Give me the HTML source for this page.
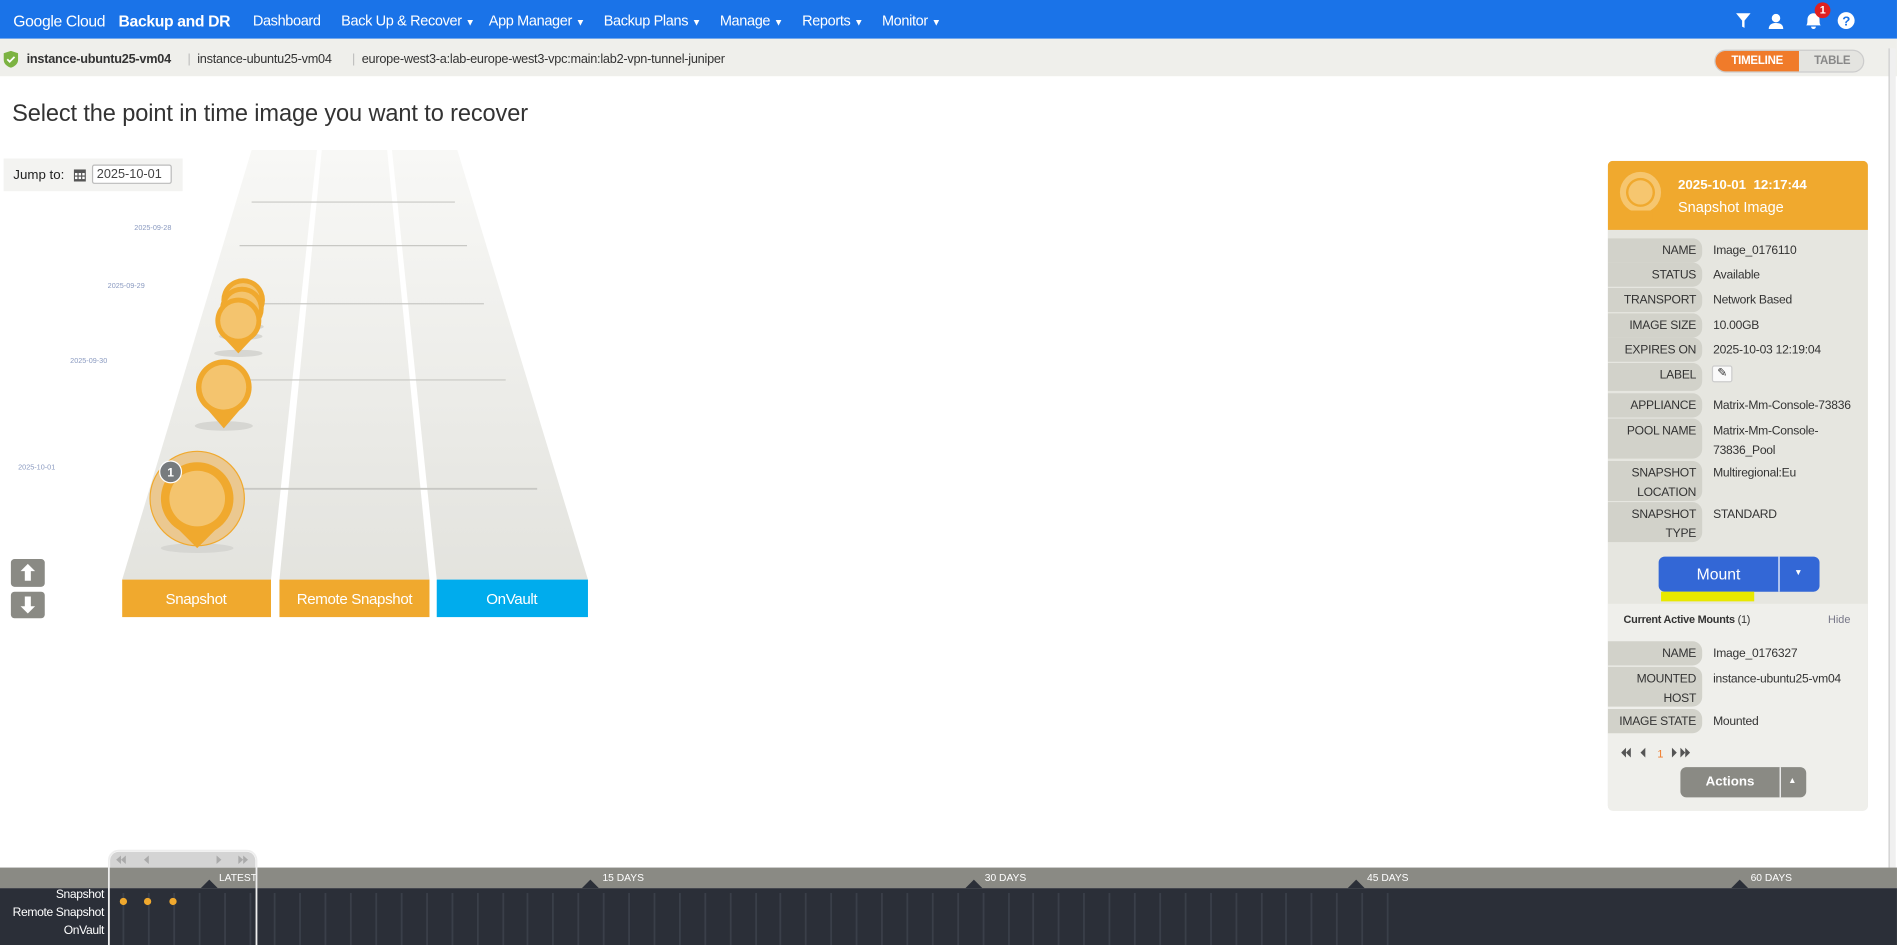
<!DOCTYPE html>
<html><head><meta charset="utf-8"><style>
*{box-sizing:border-box;margin:0;padding:0}
body{width:1897px;height:945px;overflow:hidden;background:#fff;font-family:"Liberation Sans",Arial,sans-serif}
#w{position:absolute;left:0;top:0;width:1568px;height:781px;transform:scale(1.2098,1.21);transform-origin:0 0}
.a{position:absolute}
.top{left:0;top:0;width:1568px;height:32px;background:#1a73e8;color:#fff;font-size:12px;letter-spacing:-0.3px}
.top span{position:absolute;top:10px;white-space:nowrap}
.top i{font-style:normal;font-size:8px}
.crumb{left:0;top:32px;width:1568px;height:31px;background:#efefeb;font-size:10.5px;color:#333;letter-spacing:-0.2px}
.crumb span{position:absolute;top:11px;white-space:nowrap}
.panel{left:1329px;top:133px;width:215px;height:537px;background:#e6e6e0;border-radius:4px;overflow:hidden}
.row{position:absolute;left:0;width:215px;font-size:10px;color:#333;letter-spacing:-0.2px}
.row .l{position:absolute;left:0;top:0;width:78px;background:#d2d2ca;border-radius:0 8px 8px 0;text-align:right;padding:3px 5px 0 0;line-height:16px;height:100%}
.row .v{position:absolute;left:87px;top:3px;line-height:16px;white-space:nowrap}
.tl{font-size:10px;color:#fff;text-align:right;position:absolute;left:0;width:86px;letter-spacing:-0.3px}
</style></head><body><div id="w">
<div class="a top">
<span style="left:11px;font-size:13px">Google Cloud</span>
<span style="left:98px;font-size:13px;font-weight:bold">Backup and DR</span>
<span style="left:209px">Dashboard</span>
<span style="left:282px">Back Up &amp; Recover <i>▼</i></span>
<span style="left:404px">App Manager <i>▼</i></span>
<span style="left:499px">Backup Plans <i>▼</i></span>
<span style="left:595px">Manage <i>▼</i></span>
<span style="left:663px">Reports <i>▼</i></span>
<span style="left:729px">Monitor <i>▼</i></span>
<svg class="a" style="left:1434px;top:9px" width="100" height="16"><path d="M1 2h12l-5 6v6l-2-1v-5z" fill="#fff"/><circle cx="34" cy="6" r="3.5" fill="#fff"/><path d="M28 15c0-4 3-5 6-5s6 1 6 5z" fill="#fff"/><path d="M59 12c1-1 1-3 1-5a5 5 0 0 1 10 0c0 2 0 4 1 5zM63 13h4a2 2 0 0 1-4 0z" fill="#fff"/><circle cx="92" cy="8" r="7" fill="#fff"/><text x="92" y="12" font-size="11" font-weight="bold" fill="#1a73e8" text-anchor="middle" font-family="Liberation Sans">?</text></svg>
<div class="a" style="left:1500px;top:2px;width:13px;height:13px;border-radius:50%;background:#e02020;font-size:9px;text-align:center;line-height:13px;font-weight:bold">1</div>
</div>
<div class="a crumb">
<svg class="a" style="left:3px;top:10px" width="12" height="14"><path d="M6 0l6 2v5c0 4-3 6-6 7-3-1-6-3-6-7V2z" fill="#7cb342"/><path d="M3 7l2 2 4-4" stroke="#fff" stroke-width="1.5" fill="none"/></svg>
<span style="left:22px;font-weight:bold">instance-ubuntu25-vm04</span>
<span style="left:155px;color:#bbb">|</span>
<span style="left:163px">instance-ubuntu25-vm04</span>
<span style="left:291px;color:#bbb">|</span>
<span style="left:299px">europe-west3-a:lab-europe-west3-vpc:main:lab2-vpn-tunnel-juniper</span>
<div class="a" style="left:1417px;top:9px;width:124px;height:19px;border-radius:10px;border:1px solid #ccc;background:#e4e4e0;overflow:hidden;font-size:9.5px;font-weight:bold">
<div class="a" style="left:0;top:0;width:69px;height:19px;background:#f07b2a;color:#fff;text-align:center;line-height:18px">TIMELINE</div>
<div class="a" style="left:69px;top:0;width:55px;height:19px;color:#888;text-align:center;line-height:18px">TABLE</div></div>
</div>
<div class="a" style="left:10px;top:83px;font-size:19.5px;color:#333;letter-spacing:-0.1px">Select the point in time image you want to recover</div>
<div class="a" style="left:3px;top:131px;width:148px;height:27px;background:#f3f3f1;font-size:11px;color:#222">
<span class="a" style="left:8px;top:8px">Jump to:</span>
<svg class="a" style="left:58px;top:9px" width="10" height="10"><rect width="10" height="10" fill="#555"/><g fill="#fff"><rect x="1" y="3" width="2" height="2"/><rect x="4" y="3" width="2" height="2"/><rect x="7" y="3" width="2" height="2"/><rect x="1" y="6" width="2" height="2"/><rect x="4" y="6" width="2" height="2"/><rect x="7" y="6" width="2" height="2"/></g></svg>
<div class="a" style="left:73px;top:5px;width:66px;height:16px;border:1px solid #bbb;border-radius:2px;background:#fff;padding:1px 3px;font-size:10.5px;color:#444;white-space:nowrap;overflow:hidden">2025-10-01</div></div>
<svg class="a" style="left:0;top:120px" width="520" height="400" font-family="Liberation Sans">
<defs><linearGradient id="g" x1="0" y1="0" x2="0" y2="1"><stop offset="0" stop-color="#f8f8f6"/><stop offset="1" stop-color="#e3e3de"/></linearGradient></defs>
<polygon points="208,4 262,4 224,359 101,359" fill="url(#g)"/>
<polygon points="266,4 320,4 355,359 231,359" fill="url(#g)"/>
<polygon points="324,4 378,4 486,359 361,359" fill="url(#g)"/>
<g stroke="#c8c8c4" stroke-width="1"><line x1="208" y1="47" x2="376" y2="47"/><line x1="198" y1="83" x2="386" y2="83"/><line x1="186" y1="131" x2="400" y2="131"/><line x1="170" y1="194" x2="418" y2="194"/><line x1="145" y1="284" x2="444" y2="284" stroke-width="1.5"/></g>
<g font-size="6" fill="#8a9ac0"><text x="111" y="70">2025-09-28</text><text x="89" y="118">2025-09-29</text><text x="58" y="180">2025-09-30</text><text x="15" y="268">2025-10-01</text></g>
<g fill="#d6d6d2"><ellipse cx="201" cy="150" rx="17" ry="3"/><ellipse cx="199" cy="158" rx="18" ry="3"/><ellipse cx="197" cy="172" rx="20" ry="3"/><ellipse cx="185" cy="232" rx="24" ry="4"/><ellipse cx="163" cy="333" rx="30" ry="4"/></g>
<g><circle cx="201" cy="128" r="18" fill="#f0a92e"/><circle cx="201" cy="128" r="14" fill="#f4c46e"/>
<circle cx="200" cy="135" r="18" fill="#f0a92e"/><circle cx="200" cy="135" r="14" fill="#f4c46e"/>
<circle cx="197" cy="145" r="19" fill="#f0a92e"/><polygon points="181,155 213,155 197,172" fill="#f0a92e"/><circle cx="197" cy="145" r="15" fill="#f4c46e"/></g>
<circle cx="185" cy="200" r="23" fill="#f0a92e"/><polygon points="166,212 204,212 185,234" fill="#f0a92e"/><circle cx="185" cy="200" r="18.5" fill="#f4c46e"/>
<circle cx="163" cy="292" r="39" fill="#ebc890" stroke="#f0a92e" stroke-width="1"/>
<circle cx="163" cy="292" r="30" fill="#f0a92e"/><polygon points="140,310 186,310 163,333" fill="#f0a92e"/><circle cx="163" cy="292" r="23" fill="#f4c46e"/>
<circle cx="141" cy="270" r="9" fill="#777b7e" stroke="#fff" stroke-width="1"/><text x="141" y="274" font-size="10" font-weight="bold" fill="#fff" text-anchor="middle">1</text>
<rect x="101" y="359" width="123" height="31" fill="#f0a92e"/><rect x="231" y="359" width="124" height="31" fill="#f0a92e"/><rect x="361" y="359" width="125" height="31" fill="#00aced"/>
<g font-size="12.5" fill="#fff" text-anchor="middle" letter-spacing="-0.3"><text x="162" y="379">Snapshot</text><text x="293" y="379">Remote Snapshot</text><text x="423" y="379">OnVault</text></g>
<rect x="9" y="342" width="28" height="23" rx="3" fill="#8a8a84"/><rect x="9" y="369" width="28" height="22" rx="3" fill="#8a8a84"/>
<path d="M23 346l6 6h-3.5v8h-5v-8H17z" fill="#fff"/><path d="M23 387l6-6h-3.5v-8h-5v8H17z" fill="#fff"/>
</svg>
<div class="a panel">
<div class="a" style="left:0;top:0;width:215px;height:57px;background:#f0a92e;color:#fff">
<svg class="a" style="left:7px;top:7px" width="40" height="42"><circle cx="20" cy="19" r="17" fill="#f6c66f"/><circle cx="20" cy="19" r="12" fill="#f0a92e"/><circle cx="20" cy="19" r="10" fill="#f6c66f"/><rect x="10" y="34" width="20" height="8" fill="#f0a92e"/></svg>
<div class="a" style="left:58px;top:14px;font-size:11px;font-weight:bold">2025-10-01&nbsp;&nbsp;12:17:44</div>
<div class="a" style="left:58px;top:31px;font-size:12px">Snapshot Image</div></div>
<div class="row" style="top:64px;height:20px"><div class="l">NAME</div><div class="v">Image_0176110</div></div>
<div class="row" style="top:84px;height:20px"><div class="l">STATUS</div><div class="v">Available</div></div>
<div class="row" style="top:105px;height:20px"><div class="l">TRANSPORT</div><div class="v">Network Based</div></div>
<div class="row" style="top:126px;height:20px"><div class="l">IMAGE SIZE</div><div class="v">10.00GB</div></div>
<div class="row" style="top:146px;height:20px"><div class="l">EXPIRES ON</div><div class="v">2025-10-03 12:19:04</div></div>
<div class="row" style="top:167px;height:23px"><div class="l">LABEL</div><div class="v" style="left:86px;top:2px;width:17px;height:14px;background:#fafafa;border:1px solid #ccc;border-radius:2px;font-size:10px;text-align:center;line-height:12px">✎</div></div>
<div class="row" style="top:192px;height:20px"><div class="l">APPLIANCE</div><div class="v">Matrix-Mm-Console-73836</div></div>
<div class="row" style="top:213px;height:33px"><div class="l">POOL NAME</div><div class="v">Matrix-Mm-Console-<br>73836_Pool</div></div>
<div class="row" style="top:248px;height:33px"><div class="l">SNAPSHOT<br>LOCATION</div><div class="v">Multiregional:Eu</div></div>
<div class="row" style="top:282px;height:33px"><div class="l">SNAPSHOT<br>TYPE</div><div class="v">STANDARD</div></div>
<div class="a" style="left:42px;top:327px;width:133px;height:29px;background:#3367d6;border-radius:5px;color:#fff;font-size:13px">
<span class="a" style="left:0;width:99px;text-align:center;top:7px">Mount</span><div class="a" style="left:99px;top:0;width:1px;height:29px;background:#fff"></div><span class="a" style="left:112px;top:10px;font-size:7px">▼</span></div>
<div class="a" style="left:44px;top:356px;width:77px;height:8px;background:#e8e800"></div>
<div class="a" style="left:0;top:366px;width:215px;height:171px;background:#efefeb"></div>
<div class="a" style="left:13px;top:374px;font-size:9px;font-weight:bold;color:#333;letter-spacing:-0.2px">Current Active Mounts <span style="font-weight:normal">(1)</span></div>
<div class="a" style="left:182px;top:374px;font-size:9px;color:#778">Hide</div>
<div class="row" style="top:397px;height:20px"><div class="l">NAME</div><div class="v">Image_0176327</div></div>
<div class="row" style="top:418px;height:33px"><div class="l">MOUNTED<br>HOST</div><div class="v">instance-ubuntu25-vm04</div></div>
<div class="row" style="top:453px;height:20px"><div class="l">IMAGE STATE</div><div class="v">Mounted</div></div>
<svg class="a" style="left:11px;top:484px" width="60" height="10"><g fill="#555"><path d="M4 1v8L0 5zM8 1v8L4 5zM20 1v8l-4-4zM42 1v8l4-4zM49 1v8l4-4zM53 1v8l4-4z"/></g><text x="30" y="9" font-size="9" fill="#f07b2a" font-family="Liberation Sans">1</text></svg>
<div class="a" style="left:60px;top:501px;width:104px;height:25px;background:#8a8a84;border-radius:5px;color:#fff;font-size:11px;font-weight:bold">
<span class="a" style="left:0;width:82px;text-align:center;top:6px">Actions</span><div class="a" style="left:82px;top:0;width:1px;height:25px;background:#fff"></div><span class="a" style="left:89px;top:8px;font-size:7px">▲</span></div>
</div>
<div class="a" style="left:1561px;top:40px;width:6px;height:677px;background:#f0f0f0;border-left:1px solid #ccc"></div>
<div class="a" style="left:0;top:717px;width:1568px;height:17px;background:#8a8a84"></div>
<div class="a" style="left:0;top:734px;width:1568px;height:47px;background:#2b2f38"></div>
<svg class="a" style="left:0;top:700px" width="1568" height="81" font-family="Liberation Sans">
<path stroke="#3a3f49" stroke-width="1.5" d="M102 38v43M123 38v43M144 38v43M165 38v43M186 38v43M207 38v43M227 38v43M248 38v43M269 38v43M290 38v43M311 38v43M332 38v43M353 38v43M374 38v43M395 38v43M416 38v43M436 38v43M457 38v43M478 38v43M499 38v43M520 38v43M541 38v43M562 38v43M583 38v43M604 38v43M625 38v43M645 38v43M666 38v43M687 38v43M708 38v43M729 38v43M750 38v43M771 38v43M792 38v43M813 38v43M834 38v43M854 38v43M875 38v43M896 38v43M917 38v43M938 38v43M959 38v43M980 38v43M1001 38v43M1022 38v43M1043 38v43M1063 38v43M1084 38v43M1105 38v43M1126 38v43M1147 38v43"/>
<g fill="#2b2f38"><polygon points="166,34 180,34 173,27"/><polygon points="481,34 495,34 488,27"/><polygon points="798,34 812,34 805,27"/><polygon points="1114,34 1128,34 1121,27"/><polygon points="1431,34 1445,34 1438,27"/></g>
<g font-size="8.5" fill="#fff"><text x="181" y="28">LATEST</text><text x="498" y="28">15 DAYS</text><text x="814" y="28">30 DAYS</text><text x="1130" y="28">45 DAYS</text><text x="1447" y="28">60 DAYS</text></g>
<path d="M90 81V11a8 8 0 0 1 8-8h106a8 8 0 0 1 8 8v70" fill="none" stroke="#eee" stroke-width="1.5"/>
<path d="M91 17V11a7 7 0 0 1 7-7h106a7 7 0 0 1 7 7v6z" fill="#d4d4d4"/>
<g fill="#aaa"><path d="M100 7v7l-4-3.5zM104 7v7l-4-3.5zM123 7v7l-4-3.5zM179 7v7l4-3.5zM197 7v7l4-3.5zM201 7v7l4-3.5z"/></g>
<g fill="#f0a92e"><circle cx="102" cy="45" r="3"/><circle cx="122" cy="45" r="3"/><circle cx="143" cy="45" r="3"/></g>
</svg>
<div class="tl" style="top:734px">Snapshot</div>
<div class="tl" style="top:749px">Remote Snapshot</div>
<div class="tl" style="top:764px">OnVault</div>
</div></body></html>
